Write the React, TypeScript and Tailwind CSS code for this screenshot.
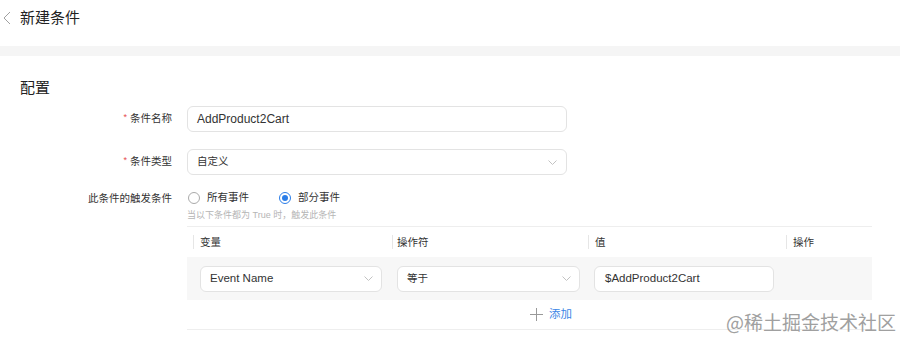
import React from "react";

const font = { fontFamily: '"Liberation Sans", "Noto Sans CJK SC", sans-serif' };

function Chevron({ className = "" }: { className?: string }) {
  return (
    <svg width="9" height="5" viewBox="0 0 9 5" className={className}>
      <path d="M0.5 0.5 L4.5 4.5 L8.5 0.5" fill="none" stroke="#c2c2c2" strokeWidth="1" />
    </svg>
  );
}

function Select({ value, w, latin }: { value: string; w: string; latin?: boolean }) {
  return (
    <div className={`${w} h-[26px] rounded-[6px] border border-[#e3e3e3] bg-white flex items-center justify-between pl-[9px] pr-[8px]`}>
      <span className={`${latin ? "text-[11.5px]" : "text-[10.5px]"} text-[#333]`}>{value}</span>
      <Chevron />
    </div>
  );
}

function Radio({ checked, label }: { checked?: boolean; label: string }) {
  return (
    <div className="flex items-center gap-[7px]">
      <span
        className={`w-[12px] h-[12px] rounded-full border flex items-center justify-center bg-white ${
          checked ? "border-[#2a7de8]" : "border-[#aaa]"
        }`}
      >
        {checked && <span className="w-[6px] h-[6px] rounded-full bg-[#2a7de8]" />}
      </span>
      <span className="text-[10.5px] text-[#333]">{label}</span>
    </div>
  );
}

export default function App() {
  return (
    <div className="relative w-[900px] h-[346px] bg-white overflow-hidden" style={font}>
      {/* header */}
      <div className="h-[46px] flex items-start pt-[9px] pl-[3px]">
        <svg width="8" height="14" viewBox="0 0 8 14" className="mt-[2px]">
          <path d="M7 1 L1 7 L7 13" fill="none" stroke="#a0a0a0" strokeWidth="1" />
        </svg>
        <span className="ml-[9px] text-[15px] leading-[18px] text-[#222]">新建条件</span>
      </div>
      <div className="h-[10px] bg-[#f5f5f5]" />

      {/* section */}
      <div className="pt-[20px]">
        <div className="pl-[20px] text-[15px] leading-[24px] text-[#222]">配置</div>

        {/* row 1 */}
        <div className="flex items-center mt-[6px]">
          <div className="w-[172px] text-right text-[10.5px] text-[#333]">
            <span className="text-[#e5484d] text-[9px] align-top mr-[3px]">*</span>条件名称
          </div>
          <div className="ml-[15px] w-[380px] h-[26px] rounded-[6px] border border-[#e3e3e3] flex items-center pl-[9px] text-[12px] text-[#333]">
            AddProduct2Cart
          </div>
        </div>

        {/* row 2 */}
        <div className="flex items-center mt-[17px]">
          <div className="w-[172px] text-right text-[10.5px] text-[#333]">
            <span className="text-[#e5484d] text-[9px] align-top mr-[3px]">*</span>条件类型
          </div>
          <div className="ml-[15px] w-[380px] h-[26px] rounded-[6px] border border-[#e3e3e3] flex items-center justify-between pl-[9px] pr-[9px] text-[10.5px] text-[#333]">
            <span>自定义</span>
            <Chevron />
          </div>
        </div>

        {/* row 3 */}
        <div className="flex mt-[14px]">
          <div className="w-[172px] text-right text-[10.5px] text-[#333] leading-[18px]">此条件的触发条件</div>
          <div className="ml-[15px] flex-1">
            <div className="flex items-center h-[18px] pl-[1px] gap-[30px]">
              <Radio label="所有事件" />
              <Radio checked label="部分事件" />
            </div>
            <div className="text-[9px] text-[#b5b5b5] leading-[14px] mt-[1px]">当以下条件都为 True 时，触发此条件</div>

            {/* table */}
            <div className="mt-[4px] w-[685px] border-t border-[#eeeeee]">
              <div className="grid grid-cols-[6px_199px_196px_198px_86px] h-[30px] items-center text-[10.5px] text-[#333]">
                <div />
                <div className="border-l border-[#e6e6e6] pl-[6px] leading-[14px]">变量</div>
                <div className="border-l border-[#e6e6e6] pl-[4px] leading-[14px]">操作符</div>
                <div className="border-l border-[#e6e6e6] pl-[6px] leading-[14px]">值</div>
                <div className="border-l border-[#e6e6e6] pl-[6px] leading-[14px]">操作</div>
              </div>
              <div className="grid grid-cols-[6px_199px_196px_198px_86px] h-[43px] items-center bg-[#f7f7f7]">
                <div />
                <div className="pl-[7px]">
                  <Select latin value="Event Name" w="w-[182px]" />
                </div>
                <div className="pl-[5px]">
                  <Select value="等于" w="w-[183px]" />
                </div>
                <div className="pl-[6px]">
                  <div className="w-[180px] h-[26px] rounded-[6px] border border-[#e3e3e3] bg-white flex items-center pl-[10px] text-[11.5px] text-[#333]">
                    $AddProduct2Cart
                  </div>
                </div>
                <div />
              </div>
              <div className="h-[30px] flex items-center border-b border-[#eeeeee] pl-[343px]">
                <svg width="13" height="13" viewBox="0 0 13 13">
                  <path d="M6.5 0 V13 M0 6.5 H13" stroke="#999" strokeWidth="1" />
                </svg>
                <span className="ml-[6px] text-[11.5px] text-[#3b86e6]">添加</span>
              </div>
            </div>
          </div>
        </div>
      </div>

      {/* watermark */}
      <div
        className="absolute left-[726px] top-[310px] text-[19px] text-[#a0a0a0] leading-[24px]"
        style={{ fontFamily: '"Noto Sans CJK SC", sans-serif' }}
      >
        @稀土掘金技术社区
      </div>
    </div>
  );
}
